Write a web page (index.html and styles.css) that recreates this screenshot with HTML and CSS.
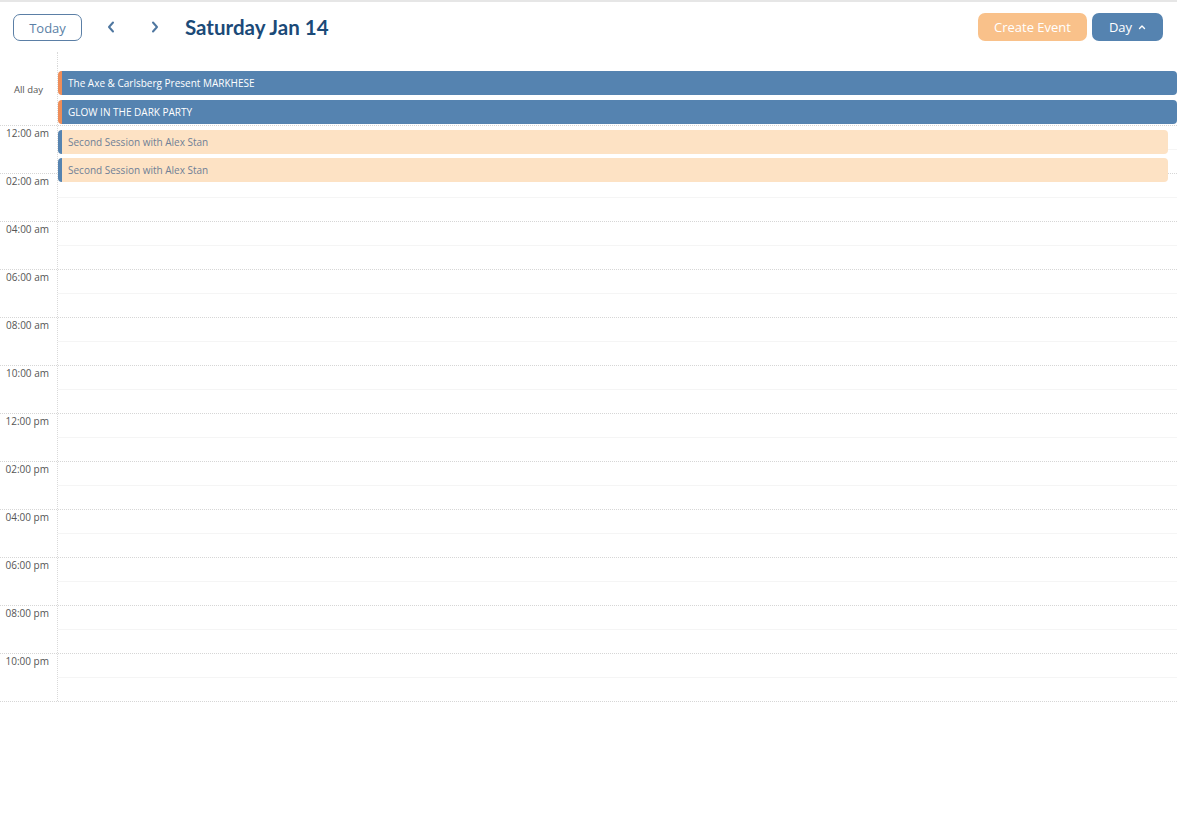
FILE: index.html
```html
<!DOCTYPE html>
<html>
<head>
<meta charset="utf-8">
<link rel="stylesheet" href="styles.css">
</head>
<body>
<div class="page">
  <div class="toolbar">
    <div class="left">
      <button class="btn-today">Today</button>
      <button class="nav nav-prev" aria-label="previous"><svg width="10" height="14" viewBox="0 0 10 14"><path d="M7 2.5 L3 7 L7 11.5" fill="none" stroke="#4f77a0" stroke-width="2" stroke-linecap="round" stroke-linejoin="round"/></svg></button>
      <button class="nav nav-next" aria-label="next"><svg width="10" height="14" viewBox="0 0 10 14"><path d="M3 2.5 L7 7 L3 11.5" fill="none" stroke="#4f77a0" stroke-width="2" stroke-linecap="round" stroke-linejoin="round"/></svg></button>
      <h1 class="title">Saturday Jan 14</h1>
    </div>
    <div class="right">
      <button class="btn-create">Create Event</button>
      <button class="btn-day">Day <svg width="8" height="6" viewBox="0 0 8 6"><path d="M1.5 4.5 L4 2 L6.5 4.5" fill="none" stroke="#fff" stroke-width="1.4" stroke-linecap="round" stroke-linejoin="round"/></svg></button>
    </div>
  </div>
  <div class="cal">
    <div class="header-gap"><div class="gutter"></div><div class="col"></div></div>
    <div class="allday">
      <div class="gutter allday-label">All day</div>
      <div class="allday-events">
        <div class="ad-event">The Axe &amp; Carlsberg Present MARKHESE</div>
        <div class="ad-event">GLOW IN THE DARK PARTY</div>
      </div>
    </div>
    <div class="timegrid">
      <div class="slots">
        <div class="group"><div class="gutter label">12:00 am</div><div class="cells"><div class="cell"></div><div class="cell"></div></div></div>
        <div class="group"><div class="gutter label">02:00 am</div><div class="cells"><div class="cell"></div><div class="cell"></div></div></div>
        <div class="group"><div class="gutter label">04:00 am</div><div class="cells"><div class="cell"></div><div class="cell"></div></div></div>
        <div class="group"><div class="gutter label">06:00 am</div><div class="cells"><div class="cell"></div><div class="cell"></div></div></div>
        <div class="group"><div class="gutter label">08:00 am</div><div class="cells"><div class="cell"></div><div class="cell"></div></div></div>
        <div class="group"><div class="gutter label">10:00 am</div><div class="cells"><div class="cell"></div><div class="cell"></div></div></div>
        <div class="group"><div class="gutter label">12:00 pm</div><div class="cells"><div class="cell"></div><div class="cell"></div></div></div>
        <div class="group"><div class="gutter label">02:00 pm</div><div class="cells"><div class="cell"></div><div class="cell"></div></div></div>
        <div class="group"><div class="gutter label">04:00 pm</div><div class="cells"><div class="cell"></div><div class="cell"></div></div></div>
        <div class="group"><div class="gutter label">06:00 pm</div><div class="cells"><div class="cell"></div><div class="cell"></div></div></div>
        <div class="group"><div class="gutter label">08:00 pm</div><div class="cells"><div class="cell"></div><div class="cell"></div></div></div>
        <div class="group"><div class="gutter label">10:00 pm</div><div class="cells"><div class="cell"></div><div class="cell"></div></div></div>
      </div>
      <div class="events">
        <div class="t-event ev1">Second Session with Alex Stan</div>
        <div class="t-event ev2">Second Session with Alex Stan</div>
      </div>
    </div>
  </div>
</div>
</body>
</html>
```
FILE: styles.css
```css
* { box-sizing: border-box; }
html, body { margin: 0; padding: 0; background: #fff; }
body { font-family: "Open Sans", "Liberation Sans", sans-serif; color: #555; }
.page { border-top: 2px solid #e6e6e6; width: 1177px; }
.toolbar { display: flex; justify-content: space-between; align-items: center; height: 50px; padding: 0 14px 0 13px; }
.left { display: flex; align-items: center; }
.right { display: flex; align-items: center; gap: 5px; }
button { font-family: inherit; cursor: pointer; }
.btn-today { width: 69px; height: 27px; border: 1px solid #5b7fa6; border-radius: 7px; background: #fff; color: #5b7fa6; font-size: 13px; padding: 0; margin-top: 1px; }
.nav { border: 0; background: none; padding: 0; width: 24px; height: 24px; display: flex; align-items: center; justify-content: center; }
.nav-prev { margin-left: 17px; }
.nav-next { margin-left: 20px; }
.title { margin: 0 0 0 18px; font-family: Lato, "Open Sans", sans-serif; font-weight: 700; font-size: 20.5px; color: #1b4a78; line-height: 1; }
.btn-create { width: 109px; height: 28px; border: 0; border-radius: 7px; background: #f9c18a; color: #fff; font-size: 13px; padding: 0; }
.btn-day { width: 71px; height: 28px; border: 0; border-radius: 7px; background: #5583b0; color: #fff; font-size: 13px; padding: 0; display: flex; align-items: center; justify-content: center; gap: 6px; }
.cal { display: flex; flex-direction: column; }
.gutter { width: 58px; flex: none; border-right: 1px dotted #d9d9d9; }
.header-gap { display: flex; height: 14px; }
.allday { display: flex; height: 60px; border-bottom: 1px dotted #d6d6d6; }
.allday-label { font-size: 9.5px; color: #555; text-align: center; padding: 17px 0 0 0; }
.allday-events { flex: 1; display: flex; flex-direction: column; gap: 5px; padding-top: 5px; }
.ad-event { height: 24px; background: #5583b0; border-left: 4px solid #ef8d58; border-radius: 4px; color: #fff; font-size: 10px; font-weight: 500; display: flex; align-items: center; padding-left: 6px; white-space: nowrap; }
.timegrid { position: relative; }
.group { display: flex; height: 48px; border-bottom: 1px dotted #d6d6d6; }
.label { font-size: 10px; color: #555; text-align: right; padding: 0 8px 0 0; }
.cells { flex: 1; display: flex; flex-direction: column; }
.cell { height: 24px; }
.cell:first-child { border-bottom: 1px solid #f5f5f5; }
.events { position: absolute; left: 58px; right: 9px; top: 0; }
.t-event { position: absolute; left: 0; right: 0; height: 24px; background: #fde2c4; border-left: 4px solid #5583b0; border-radius: 4px; color: #6f7f96; font-size: 10px; display: flex; align-items: center; padding-left: 6px; }
.ev1 { top: 4px; }
.ev2 { top: 32px; }
```
